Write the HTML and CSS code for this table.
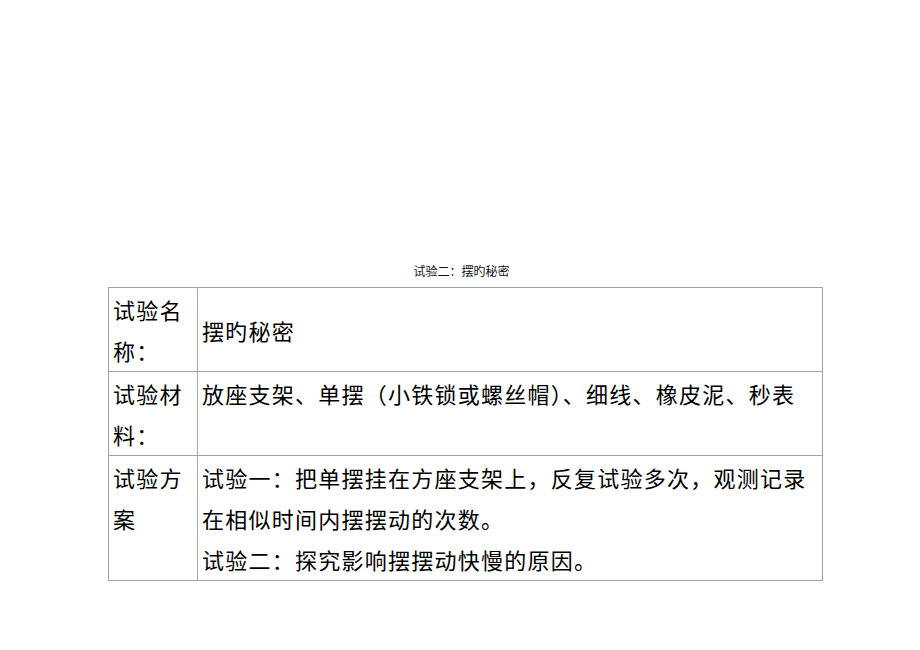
FILE: index.html
```html
<!DOCTYPE html>
<html lang="zh-CN">
<head>
<meta charset="utf-8">
<title>试验二：摆旳秘密</title>
<link rel="stylesheet" href="styles.css">
</head>
<body>
<div class="page">
  <div class="caption">试验二：摆旳秘密</div>
  <table class="exp">
    <colgroup><col class="c-label"><col class="c-body"></colgroup>
    <tr class="r1">
      <td class="label">试验名称：</td>
      <td class="body mid">摆旳秘密</td>
    </tr>
    <tr class="r2">
      <td class="label">试验材料：</td>
      <td class="body">放座支架、单摆（小铁锁或螺丝帽<span class="trim">）</span>、细线、橡皮泥、秒表</td>
    </tr>
    <tr class="r3">
      <td class="label">试验方案</td>
      <td class="body">试验一：把单摆挂在方座支架上，反复试验多次，观测记录在相似时间内摆摆动的次数。<br>试验二：探究影响摆摆动快慢的原因。</td>
    </tr>
  </table>
</div>
</body>
</html>
```
FILE: styles.css
```css
html, body {
  margin: 0;
  padding: 0;
  background: #ffffff;
}
body {
  font-family: "Noto Sans CJK SC", "Liberation Serif", serif;
  color: #000;
  text-spacing-trim: space-all;
}
.page {
  padding-top: 263px;
  padding-left: 108px;
  width: 715px;
}
.caption {
  text-align: center;
  font-size: 12px;
  line-height: 16px;
  height: 16px;
  margin-bottom: 8px;
  padding-right: 8px;
  color: #111;
}
.exp {
  border-collapse: collapse;
  width: 715px;
  table-layout: fixed;
}
.c-label { width: 89px; }
.exp td {
  border: 1px solid #a4a0a4;
  font-size: 22px;
  letter-spacing: 1.25px;
  line-height: 41px;
  vertical-align: top;
  padding: 1px 4px 0 4px;
}
.exp tr + tr td {
  border-top-color: #b9abc1;
}
.exp td.label {
  border-right-color: #a0b0a0;
}
.exp td.mid {
  vertical-align: middle;
}
.exp .trim {
  letter-spacing: -10px;
}
.exp .r1 td, .exp .r2 td { height: 82px; }
.exp .r3 td { height: 123px; }
```
